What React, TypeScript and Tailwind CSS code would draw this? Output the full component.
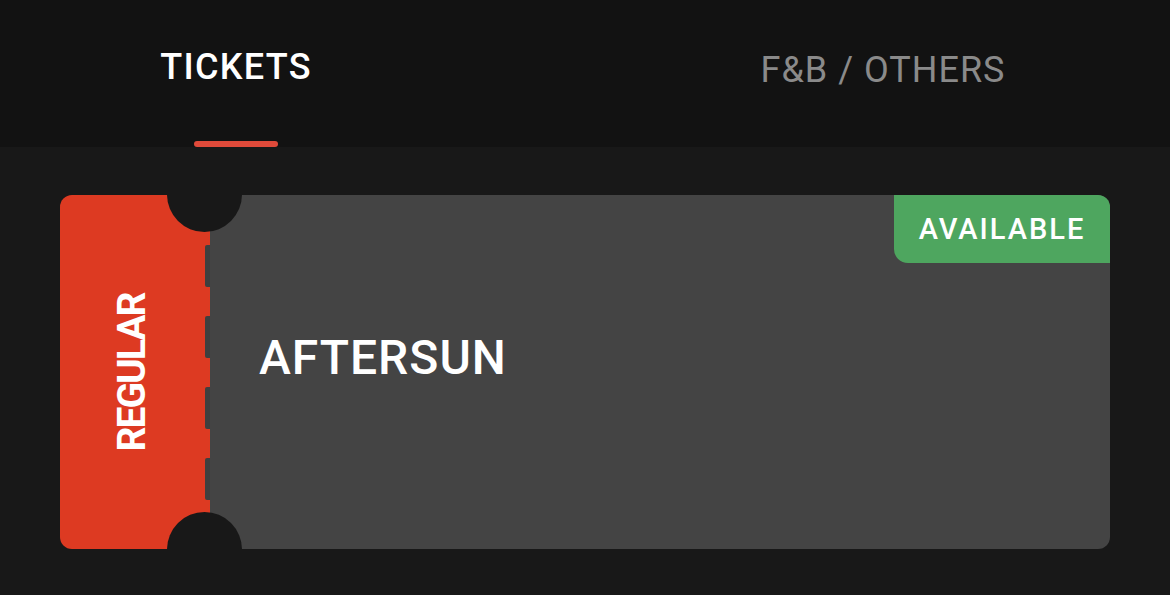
export default function App() {
  const dashes = [0, 1, 2, 3]

  return (
    <div className="w-[1170px] h-[595px] bg-[#181818] overflow-hidden" style={{ fontFamily: "Roboto, 'Noto Sans', sans-serif" }}>
      {/* tabs */}
      <div className="h-[147px] bg-[#121212] flex">
        <div className="w-[472px] h-full flex flex-col items-center justify-between pt-[49px]">
          <span className="text-[36px] leading-[36px] font-medium tracking-[1.3px] text-white">TICKETS</span>
          <div className="w-[84px] h-[6px] rounded-full bg-[#e04a3a]" />
        </div>
        <div className="w-[300px] ml-[261px] h-full flex justify-center pt-[52px]">
          <span className="text-[36px] leading-[36px] tracking-[1px] text-[#8a8a8a]">F&amp;B / OTHERS</span>
        </div>
      </div>

      {/* ticket */}
      <div className="mt-[48px] mx-[60px] h-[354px] rounded-[12px] overflow-hidden relative flex">
        <div className="w-[150px] shrink-0 bg-[#dd3a22] flex">
          <div className="flex-1 min-w-0 flex items-center justify-center">
            <span className="-rotate-90 whitespace-nowrap text-[39px] leading-none font-bold tracking-[-2px] text-white">REGULAR</span>
          </div>
          <div className="w-[5px] shrink-0 flex flex-col pt-[50px] gap-[29px]">
            {dashes.map((d) => (
              <div key={d} className="h-[42px] bg-[#3f3f3f] rounded-l-[2px]" />
            ))}
          </div>
        </div>

        <div className="flex-1 bg-[#444444] pl-[49px] pt-[139px]">
          <div className="text-[48px] leading-[48px] font-medium tracking-[1px] text-white">AFTERSUN</div>
        </div>

        {/* notches */}
        <div className="absolute left-[107px] -top-[38px] w-[75px] h-[75px] rounded-full bg-[#181818]" />
        <div className="absolute left-[107px] -bottom-[38px] w-[75px] h-[75px] rounded-full bg-[#181818]" />

        {/* badge */}
        <div className="absolute top-0 right-0 w-[216px] h-[68px] bg-[#4ea65f] rounded-bl-[14px] flex items-center justify-center">
          <span className="text-[29px] leading-none font-medium tracking-[2px] text-white">AVAILABLE</span>
        </div>
      </div>
    </div>
  )
}
